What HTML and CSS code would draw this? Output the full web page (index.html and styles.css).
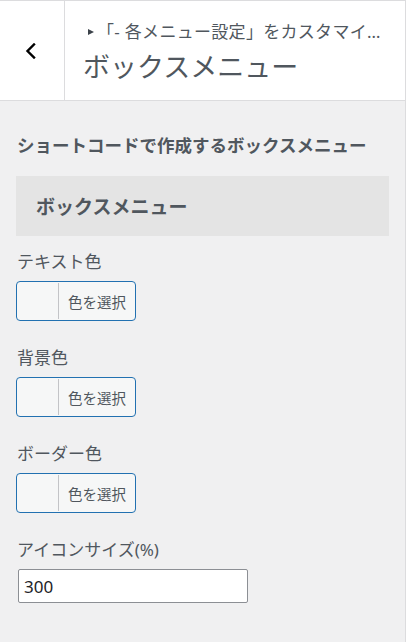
FILE: index.html
```html
<!DOCTYPE html>
<html lang="ja">
<head>
<meta charset="utf-8">
<link rel="stylesheet" href="styles.css">
</head>
<body>
<div class="panel">
  <header class="panel-head">
    <button class="back" type="button" aria-label="戻る">
      <svg width="14" height="16" viewBox="0 0 14 16"><path d="M10 1.5 L3.5 8 L10 14.5" fill="none" stroke="#000" stroke-width="2.4" stroke-linecap="square"/></svg>
    </button>
    <div class="head-title">
      <div class="crumb"><span class="tri"></span><span class="crumb-text">「- 各メニュー設定」をカスタマイ…</span></div>
      <h1 class="title">ボックスメニュー</h1>
    </div>
  </header>
  <main class="body">
    <h3 class="desc">ショートコードで作成するボックスメニュー</h3>
    <div class="box-title">ボックスメニュー</div>
    <div class="control">
      <div class="label">テキスト色</div>
      <button class="picker" type="button"><span class="swatch"></span><span class="pick-text">色を選択</span></button>
    </div>
    <div class="control">
      <div class="label">背景色</div>
      <button class="picker" type="button"><span class="swatch"></span><span class="pick-text">色を選択</span></button>
    </div>
    <div class="control">
      <div class="label">ボーダー色</div>
      <button class="picker" type="button"><span class="swatch"></span><span class="pick-text">色を選択</span></button>
    </div>
    <div class="control">
      <div class="label">アイコンサイズ(%)</div>
      <input class="num" type="text" value="300">
    </div>
  </main>
</div>
</body>
</html>
```
FILE: styles.css
```css
* { box-sizing: border-box; }
html, body { margin: 0; padding: 0; }
body {
  background: #f0f0f1;
  font-family: "Noto Sans", "Noto Sans CJK JP", sans-serif;
  color: #50575e;
}
.panel {
  width: 406px;
  min-height: 642px;
  border-right: 1px solid #dcdcde;
}
.panel-head {
  display: flex;
  height: 101px;
  background: #fff;
  border-top: 1px solid #dcdcde;
  border-bottom: 1px solid #dcdcde;
}
.back {
  width: 65px;
  flex: none;
  border: 0;
  border-right: 1px solid #dcdcde;
  background: #fff;
  padding: 0;
  display: flex;
  align-items: center;
  justify-content: center;
}
.back svg { display: block; margin-left: -2px; }
.head-title {
  flex: 1;
  min-width: 0;
  padding: 20px 8px 0 23px;
}
.crumb {
  display: flex;
  align-items: center;
  height: 22px;
  font-size: 17px;
  line-height: 22px;
  white-space: nowrap;
}
.tri {
  flex: none;
  width: 0;
  height: 0;
  border-top: 3.5px solid transparent;
  border-bottom: 3.5px solid transparent;
  border-left: 6px solid #3c434a;
  margin-right: 3px;
}
.crumb-text {
  letter-spacing: 0.3px;
}
.title {
  margin: 8px 0 0 -5px;
  font-size: 27px;
  line-height: 32px;
  font-weight: 400;
  color: #50575e;
}
.body {
  padding: 32px 16px 20px 16px;
}
.desc {
  margin: 0 0 19px 1px;
  font-size: 17.5px;
  line-height: 24px;
  font-weight: 700;
}
.box-title {
  height: 60px;
  background: #e4e4e4;
  padding-left: 20px;
  display: flex;
  align-items: center;
  font-size: 19px;
  font-weight: 700;
  margin-bottom: 14px;
}
.control { margin-bottom: 25px; }
.label {
  font-size: 17px;
  line-height: 24px;
  padding-left: 1px;
  margin-bottom: 7px;
}
.picker {
  display: flex;
  align-items: stretch;
  height: 40px;
  width: 120px;
  padding: 0;
  border: 1px solid #2271b1;
  border-radius: 4px;
  background: #f6f7f7;
  font-family: inherit;
  color: #50575e;
}
.swatch {
  width: 42px;
  flex: none;
  border-right: 1px solid #c3c4c7;
  margin: 1px 0;
}
.pick-text {
  flex: 1;
  display: flex;
  align-items: center;
  justify-content: center;
  font-size: 14.5px;
}
.num {
  display: block;
  margin-left: 2px;
  width: 230px;
  height: 34px;
  border: 1px solid #8c8f94;
  border-radius: 2px;
  background: #fff;
  padding: 0 5px;
  font-family: "Noto Sans", sans-serif;
  font-size: 17px;
  color: #1d2327;
}
```
